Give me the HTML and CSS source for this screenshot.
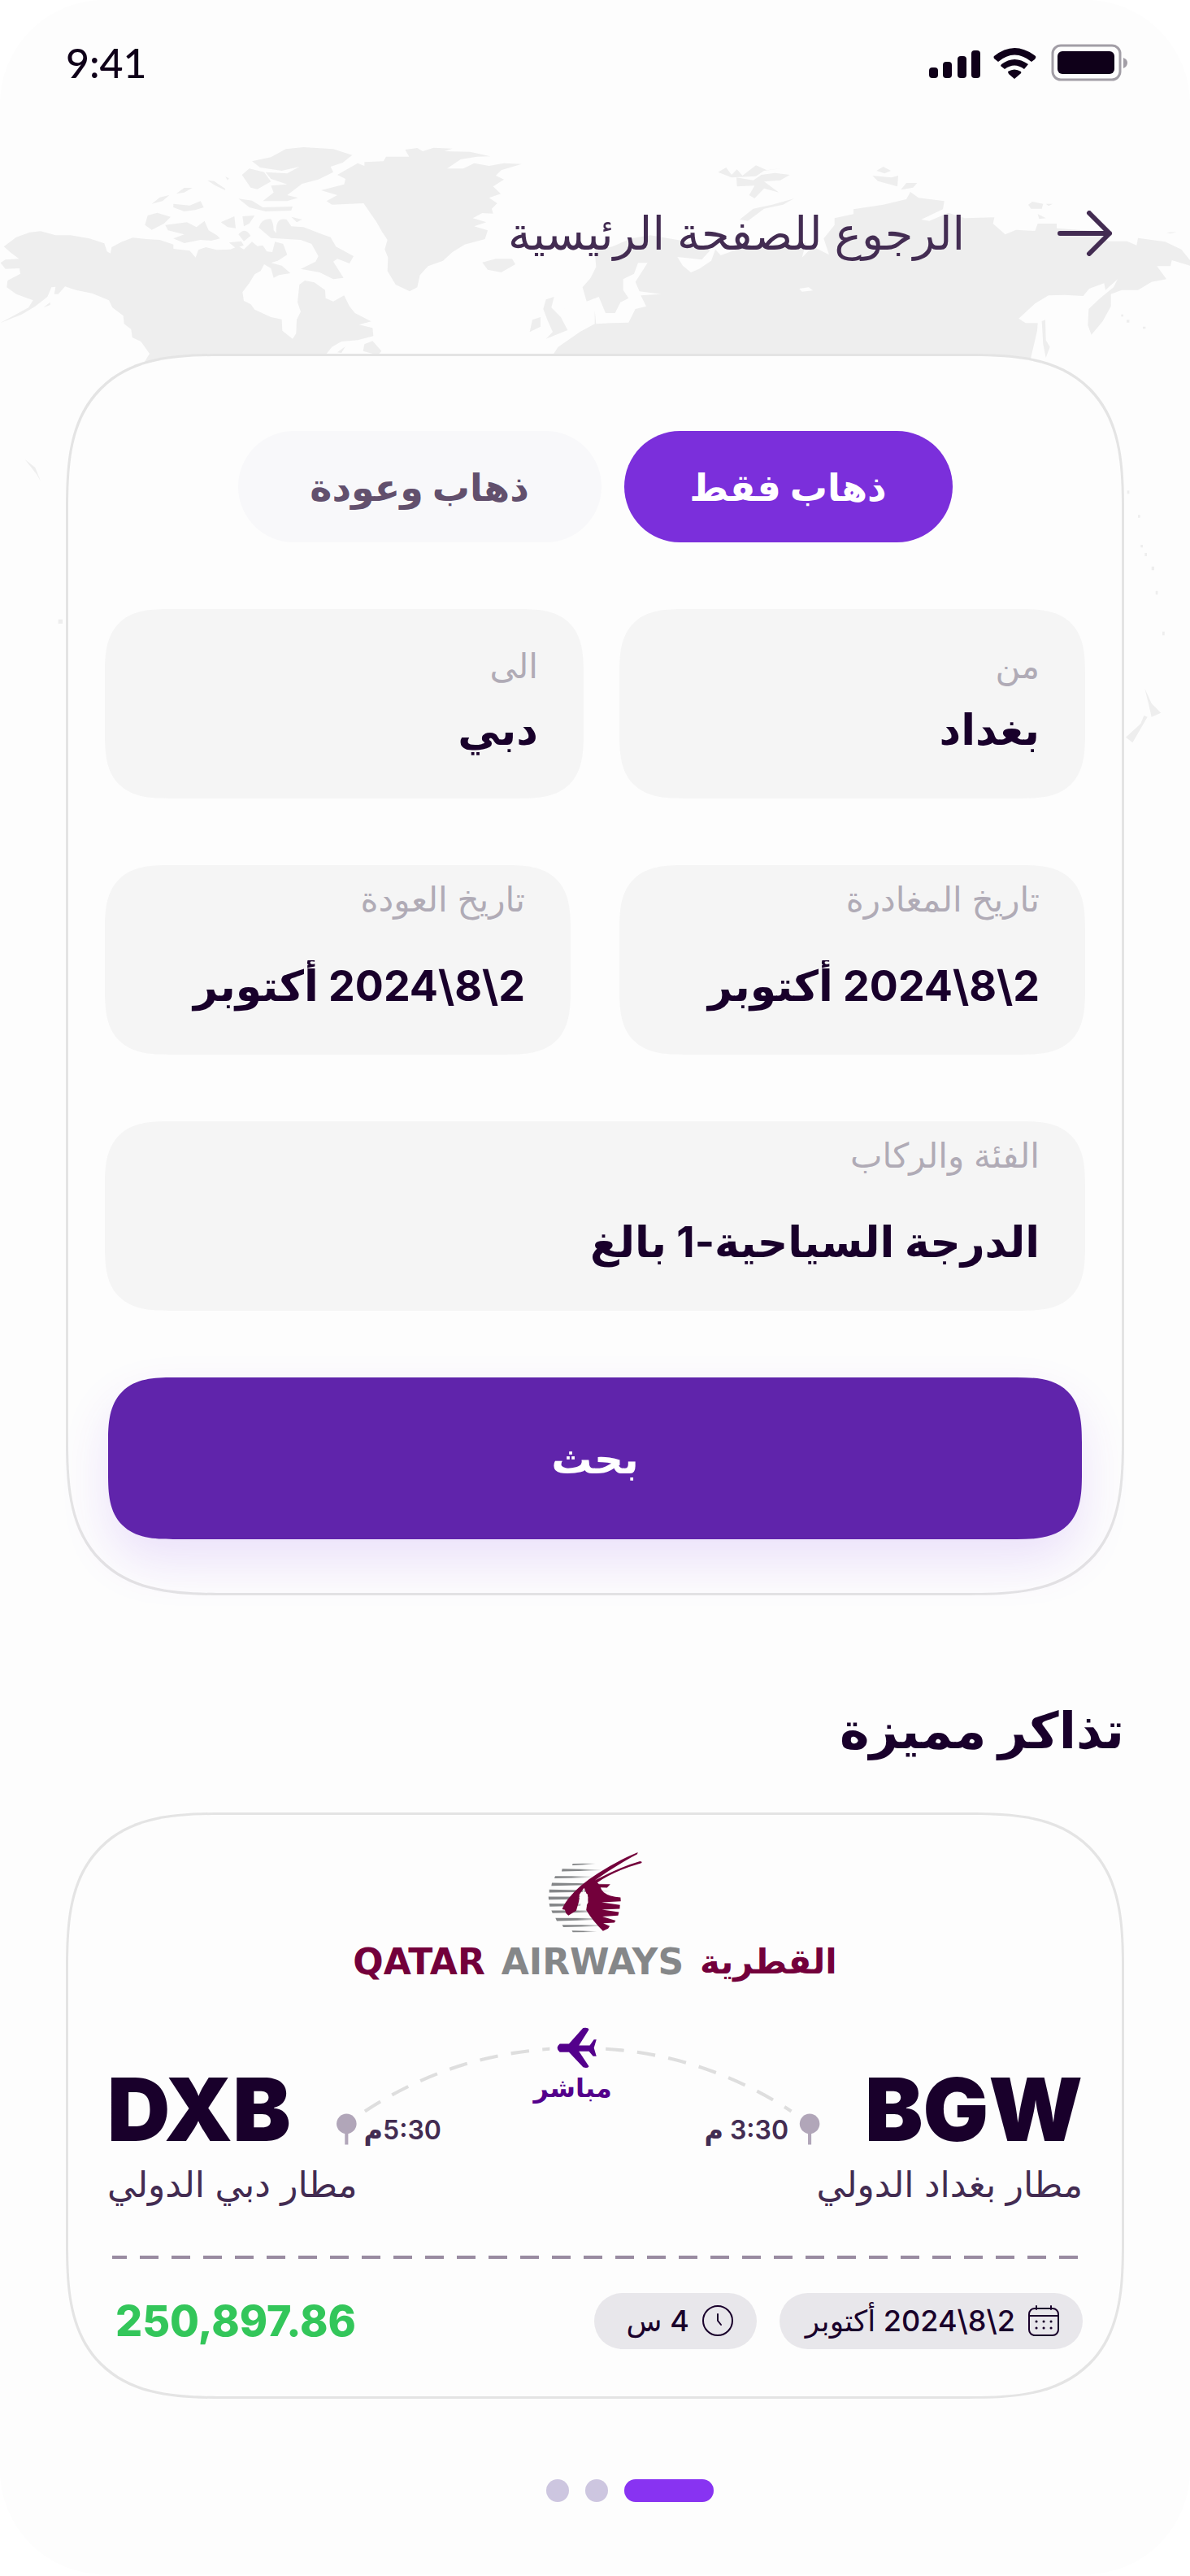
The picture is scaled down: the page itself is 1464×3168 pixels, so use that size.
FILE: index.html
```html
<!DOCTYPE html>
<html lang="ar" dir="rtl">
<head>
  <meta charset="UTF-8">
  <meta name="viewport" content="width=device-width, initial-scale=1">
  <title>حجز الرحلات</title>
  <link rel="stylesheet" href="styles.css">
</head>
<body>
  <div class="screen">
    <svg class="map" viewBox="0 0 4392 2310" aria-hidden="true">
      <g fill="#eeeeee">
        <!-- America -->
        <path d="M14 430 L60 395 L110 377 L150 373 L205 388 L260 388 L330 400 L385 418 L395 448 L408 455 L412 432 L450 412 L490 397 L540 402 L590 405 L640 422 L640 438 L700 445 L722 470 L732 442 L760 432 L800 442 L850 440 L880 428 L900 440 L930 412 L950 428 L970 425 L985 448 L1005 450 L1015 412 L1045 420 L1060 460 L1025 482 L1000 490 L1040 500 L1072 528 L1030 535 L1010 545 L1000 510 L975 495 L962 520 L940 532 L920 565 L895 598 L900 630 L925 642 L940 662 L1000 690 L1040 698 L1042 740 L1080 770 L1093 750 L1095 700 L1110 670 L1098 635 L1105 570 L1125 555 L1160 562 L1200 590 L1202 620 L1230 632 L1270 610 L1290 650 L1310 675 L1370 706 L1325 718 L1375 730 L1378 760 L1320 775 L1260 780 L1225 800 L1205 825 L1205 860 L530 860 L552 825 L520 780 L488 765 L484 735 L458 715 L455 685 L415 655 L402 628 L340 602 L280 590 L240 577 L215 605 L200 605 L205 578 L190 580 L175 615 L130 650 L80 680 L0 712 L50 685 L105 655 L122 628 L60 605 L25 580 L28 555 L75 530 L72 510 L20 512 L2 490 L20 478 L70 475 L40 452Z"/>
        <!-- northern islands -->
        <path d="M535 350 L545 315 L580 305 L630 320 L605 345 L560 368Z M610 350 L650 345 L690 340 L725 358 L755 335 L770 370 L800 388 L812 400 L780 408 L740 405 L680 417 L640 400 L680 385 L620 370Z M560 272 L590 248 L625 240 L600 262Z M650 235 L680 213 L710 213 L680 230Z M640 272 L700 278 L740 262 L752 285 L720 295 L680 300 L640 285Z M765 185 L790 188 L830 215 L832 222 L795 205Z M832 172 L845 178 L840 185Z M815 340 L865 318 L870 362 L840 358Z M895 318 L940 315 L920 345 L900 355Z M880 385 Q905 355 925 390 L900 410Z M955 360 Q965 325 1000 328 Q1010 345 1010 370 L1020 380 Q1015 320 1058 330 L1075 355 L1120 358 L1190 385 L1220 395 L1240 430 L1305 465 L1290 492 L1245 475 L1230 485 L1268 545 L1230 550 L1180 525 L1110 512 L1165 485 L1175 465 L1150 420 L1110 405 L1000 398Z M1075 320 L1115 330 L1095 340Z M880 253 L930 260 L970 285 L1080 282 L1075 297 L980 300 L920 285Z M893 165 L920 142 L975 155 L1000 190 L950 218 L925 212Z M930 115 L1000 100 L1055 70 L1120 63 L1230 70 L1300 92 L1265 120 L1220 135 L1230 155 L1175 182 L1115 198 L1060 240 L1100 250 L1060 262 L970 262 L1010 230 L1000 205 L1060 200 L1000 180 L980 155 L1060 160 L1105 135 L1040 150 L960 138Z M845 415 L890 410 L900 425 L870 435Z M1245 820 L1275 798 L1260 822Z M1340 815 L1345 790 L1375 778 L1408 815 L1395 830Z M160 655 L185 635 L185 645Z"/>
        <!-- Greenland and Iceland -->
        <path d="M1205 262 L1245 240 L1185 222 L1270 200 L1275 180 L1245 165 L1320 122 L1345 132 L1345 118 L1415 115 L1425 98 L1510 98 L1495 72 L1540 66 L1560 78 L1600 65 L1670 68 L1640 78 L1735 80 L1810 97 L1760 98 L1700 108 L1650 142 L1710 142 L1750 122 L1805 132 L1860 122 L1925 125 L1850 148 L1830 168 L1860 182 L1820 208 L1848 235 L1805 250 L1835 270 L1815 290 L1820 308 L1780 306 L1745 325 L1795 340 L1750 355 L1800 370 L1790 402 L1715 422 L1670 450 L1635 482 L1580 502 L1550 535 L1540 580 L1512 595 L1460 570 L1430 520 L1432 470 L1420 440 L1430 405 L1410 375 L1390 340 L1342 270 L1225 275Z M1780 488 L1830 475 L1890 475 L1902 495 L1850 525 L1800 515Z"/>
        <!-- Europe and Asia -->
        <path d="M2195 445 L2260 430 L2330 400 L2400 388 L2500 405 L2590 425 L2620 445 L2590 478 L2500 468 L2520 500 L2550 525 L2580 512 L2625 482 L2640 440 L2660 462 L2720 440 L2800 420 L2940 425 L2975 415 L2960 470 L3000 430 L3060 460 L3040 400 L3080 350 L3080 325 L3150 310 L3150 292 L3260 275 L3345 255 L3360 228 L3390 250 L3485 262 L3480 292 L3400 330 L3430 335 L3500 305 L3560 325 L3670 322 L3665 345 L3710 385 L3750 368 L3820 372 L3830 345 L3900 345 L3900 362 L4030 372 L4090 410 L4160 410 L4195 425 L4200 398 L4300 412 L4360 440 L4392 480 L4392 500 L4325 480 L4320 502 L4270 502 L4305 550 L4250 560 L4200 590 L4140 590 L4100 605 L4100 650 L4070 705 L4028 755 L4015 720 L4018 660 L4060 620 L4110 580 L4125 550 L4080 590 L4075 565 L4020 585 L3998 612 L3930 608 L3870 610 L3820 640 L3760 695 L3785 712 L3830 712 L3828 740 L3800 860 L2020 860 L2060 800 L2140 745 L2195 715 L2195 665 L2200 715 L2255 712 L2320 710 L2345 660 L2385 650 L2365 610 L2440 605 L2360 595 L2345 560 L2390 490 L2355 490 L2340 530 L2300 550 L2300 590 L2320 620 L2290 635 L2270 675 L2235 675 L2210 615 L2165 632 L2150 580 L2180 545 L2200 505Z M2015 625 L2045 615 L2035 655 L2070 690 L2095 738 L2015 770 L2040 745 L2020 700 L2005 660Z M1955 745 L1965 700 L1995 690 L1995 725Z M3845 705 L3858 700 L3860 775 L3875 800 L3860 840 L3850 790Z"/>
        <path d="M2718 175 L2780 185 L2810 165 L2860 158 L2915 165 L2880 185 L2820 190 L2875 230 L2820 215 L2785 252 L2765 240 L2785 205 L2720 208Z M2650 155 L2680 138 L2700 165 L2720 145 L2740 168 L2790 130 L2830 148 L2890 140 L2820 150 L2790 170 L2700 175Z M2730 330 L2780 290 L2850 275 L2930 253 L2890 275 L2820 290 L2760 335Z M3235 150 L3260 135 L3288 150 L3265 160Z M3220 168 L3290 175 L3315 168 L3312 208 L3240 188Z M3325 220 L3345 195 L3385 195 L3370 212Z M3795 275 L3810 264 L3850 272 L3845 290 L3805 290Z M3860 272 L3885 272 L3870 280Z M4305 378 L4342 376 L4320 382Z M3830 310 L3860 325 L3835 328Z"/>
        <!-- islands beside the form -->
        <path d="M4225 2060 L4250 2115 L4285 2150 L4250 2165 L4240 2120Z M4222 2160 L4235 2165 L4180 2260 L4155 2240 L4210 2190Z M92 1215 L130 1245 L150 1295 L135 1270Z"/>
        <path d="M4138 680h8v8h-8z M4158 700h10v10h-10z M4218 725h10v8h-10z M4160 1330h8v12h-8z M4200 1420h8v10h-8z M4210 1530h8v10h-8z M4225 1560h8v12h-8z M4250 1610h10v14h-10z M4265 1700h8v14h-8z M4290 1850h8v14h-8z M215 1805h16v16h-16z"/>
      </g>
      <path fill="#fdfdfd" d="M2950 585 L2985 580 L3000 592 L2960 596Z M1395 448 L1400 400 L1412 440Z M2080 640 L2100 700 L2090 702Z"/>
    </svg>

    <div class="status-bar" dir="ltr">
      <span class="time">9:41</span>
      <svg class="status-icons" viewBox="-4 0 244 46" aria-hidden="true">
        <g fill="#0f0019">
          <rect x="0" y="29" width="11" height="13" rx="4"/>
          <rect x="17" y="22" width="11" height="20" rx="4"/>
          <rect x="35" y="15" width="11" height="27" rx="4"/>
          <rect x="52" y="8" width="11" height="34" rx="4"/>
          <rect x="158" y="9" width="70" height="28" rx="6"/>
        </g>
        <path fill="#0f0019" d="M80 15 Q105 -5 131 15 Q132 17 130 19 L126 22 Q105 5 85 22 L80 18 Q79 16 80 15Z M89 25 Q105 13 122 25 L117 31 Q105 22 93 31 L88 27Z M97 34 Q105 29 113 34 Q114 36 112 37 L105 43 L98 37 Q97 35 97 34Z"/>
        <rect x="152" y="2" width="83" height="42" rx="10" fill="none" stroke="#a29ea6" stroke-width="3"/>
        <path fill="#a29ea6" d="M239 17 Q244 19 244 23 Q244 28 239 30Z"/>
      </svg>
    </div>

    <header class="top">
      <a href="#" class="back">
        <svg viewBox="0 0 68 56" aria-hidden="true"><path d="M3 28H64M39 3L64 28L39 53" fill="none" stroke="#432c52" stroke-width="6" stroke-linecap="round" stroke-linejoin="round"/></svg>
        <span>الرجوع للصفحة الرئيسية</span>
      </a>
    </header>

    <form class="card search">
      <div class="tabs">
        <button type="button" class="tab active" aria-pressed="true">ذهاب فقط</button>
        <button type="button" class="tab tab-return" aria-pressed="false">ذهاب وعودة</button>
      </div>

      <div class="row cities">
        <div class="field">
          <label for="from">من</label>
          <input type="text" id="from" value="بغداد">
        </div>
        <div class="field">
          <label for="to">الى</label>
          <input type="text" id="to" value="دبي">
        </div>
      </div>

      <div class="row dates">
        <div class="field">
          <label for="departure">تاريخ المغادرة</label>
          <input type="text" id="departure" value="2\8\2024 أكتوبر">
        </div>
        <div class="field">
          <label for="return">تاريخ العودة</label>
          <input type="text" id="return" value="2\8\2024 أكتوبر">
        </div>
      </div>

      <div class="field">
        <label for="class">الفئة والركاب</label>
        <select id="class">
          <option>الدرجة السياحية-1 بالغ</option>
        </select>
      </div>

      <button type="submit" class="submit">بحث</button>
    </form>

    <h2>تذاكر مميزة</h2>

    <article class="card ticket">
      <div class="airline">
        <svg viewBox="70 45 355 310" aria-hidden="true">
          <defs>
            <linearGradient id="fade"><stop offset=".45" stop-color="#858789"/><stop offset="1" stop-color="#858789" stop-opacity="0"/></linearGradient>
          </defs>
          <g fill="url(#fade)">
            <path d="M165 96 L250 95 L250 98 L163 102Z"/>
            <path d="M126 115 L275 118 L275 121 L124 125Z"/>
            <path d="M100 142 L240 143 L240 147 L97 150Z"/>
            <path d="M88 167 L310 171 L310 173 L86 178Z"/>
            <path d="M78 192 L315 196 L315 199 L78 203Z"/>
            <path d="M75 218 L280 219 L280 226 L76 229Z"/>
            <path d="M78 244 L240 245 L240 251 L80 255Z"/>
            <path d="M86 269 L270 269 L270 275 L90 279Z"/>
            <path d="M101 297 L280 298 L280 303 L106 308Z"/>
            <path d="M126 323 L285 323 L285 327 L130 331Z"/>
            <path d="M162 344 L255 346 L255 349 L165 350Z"/>
          </g>
          <path fill="#73003b" d="M406 54 Q330 85 260 131 Q188 176 150 224 Q130 250 126 265 L136 267 L140 280 L149 288 L178 270 L188 235 L190 210 L207 186 L222 220 L215 268 Q240 310 277 345 L296 336 L302 327 L278 317 L319 314 L324 307 L275 292 L333 288 L336 275 L273 266 L339 263 L340 249 L272 239 L343 235 L342 221 Q300 218 280 202 Q270 193 268 184 L292 185 L304 172 L262 172 L256 166 Q320 122 419 94 Q425 88 414 87 Q340 108 247 158 Q320 105 404 61Z"/>
          <path fill="#fdfdfd" d="M205 192 L210 210 L220 208 L222 240 L212 256 L190 270 L196 240 L189 220 L198 215Z"/>
        </svg>
        <div class="airline-name" dir="ltr">
          <span class="maroon">QATAR</span>
          <span class="grey">AIRWAYS</span>
          <span class="maroon name-ar" lang="ar">القطرية</span>
        </div>
      </div>

      <div class="route">
        <strong class="code">BGW</strong>
        <div class="path">
          <svg viewBox="0 0 580 144" aria-hidden="true">
            <path d="M34 100 Q150 24 290 24 Q430 24 546 100" fill="none" stroke="#dedede" stroke-width="4" stroke-dasharray="22 16"/>
            <circle cx="12" cy="115" r="12" fill="#b1a6b9"/>
            <circle cx="568" cy="115" r="12" fill="#b1a6b9"/>
            <path d="M12 122V140M568 122V140" stroke="#b1a6b9" stroke-width="4"/>
            <path fill="#fdfdfd" d="M256 10H318V36H256Z"/>
            <path fill="#54008c" d="M268 19 H279 L296 0 Q302 -1 303 2 L291 21 L304 21 L309 14 H312 L309 24 L312 34 H308 L303 28 L291 28 L303 46 Q301 49 296 47 L279 29 H268 Q262 24 268 19Z"/>
          </svg>
          <div class="times">
            <span>3:30 م</span>
            <span class="direct">مباشر</span>
            <span>5:30م</span>
          </div>
        </div>
        <strong class="code">DXB</strong>
      </div>
      <div class="airports">
        <span>مطار بغداد الدولي</span>
        <span>مطار دبي الدولي</span>
      </div>

      <div class="divider"></div>

      <div class="details">
        <span class="chip">
          <svg viewBox="0 0 38 38" fill="none" stroke="#19002b" stroke-width="2" stroke-linecap="round" aria-hidden="true">
            <rect x="1" y="4" width="36" height="33" rx="7"/>
            <path d="M1 13H37M10 1V5M28 1V5"/>
            <path stroke-width="3" d="M10 20h.1M19 20h.1M28 20h.1M10 28h.1M19 28h.1M28 28h.1"/>
          </svg>
          2\8\2024 أكتوبر
        </span>
        <span class="chip chip-hours">
          <svg viewBox="0 0 38 38" fill="none" stroke="#19002b" stroke-width="2" stroke-linecap="round" aria-hidden="true">
            <circle cx="19" cy="19" r="18"/>
            <path d="M19 11V19L23 24"/>
          </svg>
          4 س
        </span>
        <span class="price">250,897.86</span>
      </div>
    </article>

    <nav class="dots">
      <button type="button" class="dot current" aria-label="1"></button>
      <button type="button" class="dot" aria-label="2"></button>
      <button type="button" class="dot" aria-label="3"></button>
    </nav>
  </div>
</body>
</html>
```
FILE: styles.css
```css
* {
  box-sizing: border-box;
}
body {
  margin: 0;
  background: #fff;
  color: #19002b;
  font-family: Inter, "DejaVu Sans", sans-serif;
}
button, input, select {
  font-family: inherit;
  color: inherit;
  border: 0;
  padding: 0;
  margin: 0;
  background: none;
}
.screen {
  position: relative;
  background: #fdfdfd;
  border-radius: 128px;
  padding: 0 81px 89px;
  overflow: hidden;
}
.map {
  position: absolute;
  top: 160px;
  left: 0;
  width: 100%;
}

/* status bar */
.status-bar {
  display: flex;
  justify-content: space-between;
  align-items: center;
  height: 100px;
  padding-top: 54px;
}
.time {
  font-family: Lato, sans-serif;
  font-size: 50px;
  font-weight: 500;
  line-height: 46px;
  color: #0f0019;
}
.status-icons {
  width: 244px;
  height: 46px;
  overflow: visible;
}

/* back link */
.top {
  position: relative;
  padding: 133px 14px 0;
  height: 335px;
}
.back {
  display: flex;
  align-items: center;
  gap: 114px;
  height: 108px;
  color: #432c52;
  font-size: 56px;
  font-weight: 500;
  text-decoration: none;
}
.back svg {
  width: 68px;
  height: 56px;
}

.card {
  position: relative;
  background: #fdfdfd;
  border: 3px solid #e4e4e4;
  border-radius: 192px;
  corner-shape: superellipse(1.5);
}

/* search form */
.search {
  display: flex;
  flex-direction: column;
  gap: 82px;
  padding: 92px 45px 66px;
}
.tabs {
  display: flex;
  justify-content: center;
  gap: 28px;
}
.tab {
  width: 404px;
  height: 137px;
  border-radius: 69px;
  background: #f8f8fa;
  color: #62506d;
  font-size: 46px;
  font-weight: 700;
}
.tab-return {
  width: 447px;
}
.tab.active {
  background: #7b2fdb;
  color: #fff;
}
.row {
  display: grid;
}
.cities {
  grid-template-columns: 36fr 37fr;
  gap: 44px;
}
.dates {
  grid-template-columns: 1fr 1fr;
  gap: 60px;
}
.field {
  display: flex;
  flex-direction: column;
  gap: 48px;
  height: 233px;
  padding: 16px 56px 0;
  background: #f5f5f5;
  border-radius: 80px;
  corner-shape: superellipse(1.5);
}
.cities .field {
  gap: 20px;
  padding-top: 44px;
}
.field label {
  font-size: 42px;
  line-height: 52px;
  color: #b0abb6;
}
.field input, .field select {
  width: 100%;
  height: 64px;
  font-size: 52px;
  font-weight: 700;
  appearance: none;
}
.submit {
  height: 199px;
  margin: 0 4px;
  border-radius: 80px;
  corner-shape: superellipse(1.5);
  background: #6024ab;
  color: #fff;
  font-size: 50px;
  font-weight: 700;
  box-shadow: 0 28px 60px rgba(124, 58, 237, 0.14);
}

h2 {
  margin: 118px 0 0;
  height: 149px;
  font-size: 62px;
  line-height: 96px;
}

/* ticket */
.ticket {
  padding: 43px 48px 58px;
}
.airline {
  display: flex;
  flex-direction: column;
  align-items: center;
}
.airline svg {
  width: 118px;
  height: 103px;
}
.airline-name {
  display: flex;
  align-items: center;
  gap: 20px;
  height: 68px;
  font-family: "DejaVu Sans", sans-serif;
  font-size: 44px;
  font-weight: 700;
}
.name-ar {
  font-size: 42px;
}
.maroon {
  color: #73003b;
}
.grey {
  color: #858789;
}
.route {
  display: flex;
  align-items: flex-end;
  gap: 56px;
  margin-top: 48px;
}
.code {
  font-size: 107px;
  font-weight: 900;
  line-height: 96px;
  height: 96px;
}
.path {
  display: grid;
  flex: 1;
  min-width: 0;
}
.path > * {
  grid-area: 1 / 1;
}
.path svg {
  width: 100%;
  overflow: visible;
}
.times {
  display: flex;
  justify-content: space-between;
  align-items: flex-end;
  padding: 0 38px 0 34px;
  font-size: 32px;
  font-weight: 600;
  line-height: 44px;
  color: #432c52;
}
.direct {
  align-self: center;
  color: #54008c;
  font-weight: 700;
}
.airports {
  display: flex;
  justify-content: space-between;
  margin-top: 12px;
  font-size: 44px;
  line-height: 64px;
  color: #432c52;
}
.divider {
  height: 4px;
  margin: 56px 6px 42px;
  background: repeating-linear-gradient(to left, #998ba1 0 23px, transparent 23px 39px);
}
.details {
  display: flex;
  align-items: center;
  gap: 28px;
}
.chip {
  display: flex;
  align-items: center;
  gap: 16px;
  height: 69px;
  padding: 0 29px 0 32px;
  border-radius: 35px;
  background: #e8e7eb;
  font-size: 36px;
  font-weight: 500;
}
.chip-hours {
  padding-left: 40px;
}
.chip svg {
  width: 38px;
  height: 38px;
}
.price {
  margin-right: auto;
  margin-left: 10px;
  color: #33c65a;
  font-size: 52px;
  font-weight: 800;
}

/* carousel dots */
.dots {
  display: flex;
  justify-content: center;
  gap: 20px;
  margin-top: 99px;
  padding-left: 86px;
}
.dot {
  width: 28px;
  height: 28px;
  border-radius: 14px;
  background: #cdc6e0;
}
.dot.current {
  width: 110px;
  background: #8833f2;
}
```
